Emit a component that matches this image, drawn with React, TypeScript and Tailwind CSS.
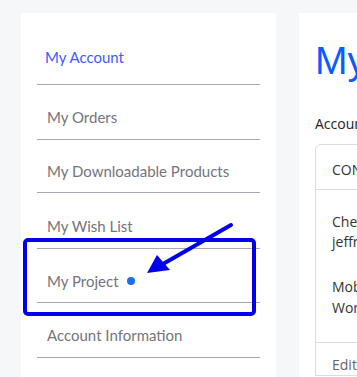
import React from "react";

const items: { label: string; h: string }[] = [
  { label: "My Orders", h: "h-[55px]" },
  { label: "My Downloadable Products", h: "h-[53px]" },
  { label: "My Wish List", h: "h-[56px]" },
  { label: "My Project", h: "h-[54px]" },
  { label: "Account Information", h: "h-[55px]" },
];

export default function App() {
  return (
    <div className="relative w-[357px] h-[377px] overflow-hidden bg-[#f6f7f9] flex gap-[23px] pl-[21px] pt-[13px]" style={{ fontFamily: '"Source Sans Pro", Lato, "Noto Sans", sans-serif' }}>
      <div className="w-[255px] shrink-0 bg-white pt-4 px-4 h-[400px]">
        <div className="h-[56px] flex items-center pl-2 pt-[2px] border-b border-[#a9a8b2] text-[15px] text-[#3d5cff]">
          My Account
        </div>
        {items.map((it) => (
          <div key={it.label} className={`${it.h} flex items-center pl-[10px] pt-[11px] border-b border-[#a9a8b2] text-[15px] text-[#76747c]`}>
            {it.label}
            {it.label === "My Project" && <span className="ml-[8px] w-[8px] h-[8px] rounded-full bg-[#1a6ff0]" />}
          </div>
        ))}
      </div>
      <div className="flex-1 bg-white pl-[16px] h-[400px] min-w-[200px]">
        <div className="text-[39px] leading-none text-[#0a5cff] mt-[28px] whitespace-nowrap" style={{ fontFamily: '"Liberation Sans", Arial, sans-serif' }}>My</div>
        <div className="mt-[33px] text-[14px] text-[#222] whitespace-nowrap" style={{ fontFamily: '"Open Sans", sans-serif' }}>Account Information</div>
        <div className="mt-[10px] border border-[#dddddd] rounded-tl-[6px] w-[300px] text-[14px] text-[#333]" style={{ fontFamily: '"Open Sans", sans-serif' }}>
          <div className="h-[45px] flex items-center pl-[16px] pt-[4px] border-b border-[#dddddd]">CONTACT INFORMATION</div>
          <div className="pl-[16px] pt-[22px] pb-[24px] leading-[20px]">
            <div>Chester Jeffries</div>
            <div>jeffries@example.com</div>
            <div className="mt-[25px]">Mobile: 555-0100</div>
            <div className="mt-[1px]">Work: 555-0101</div>
          </div>
          <div className="border-t border-[#dddddd] pl-[16px] pt-[11px] text-[#666]">Edit</div>
        </div>
      </div>

      <div className="absolute left-[23px] top-[238px] w-[233px] h-[78px] border-[4px] border-[#0000ee] rounded-[5px]" />
      <svg className="absolute left-0 top-0" width="357" height="377" viewBox="0 0 357 377">
        <line x1="231" y1="225" x2="156" y2="268" stroke="#0000ee" strokeWidth="4" strokeLinecap="round" />
        <polygon points="147,273 157,255 170,270" fill="#0000ee" />
      </svg>
    </div>
  );
}
